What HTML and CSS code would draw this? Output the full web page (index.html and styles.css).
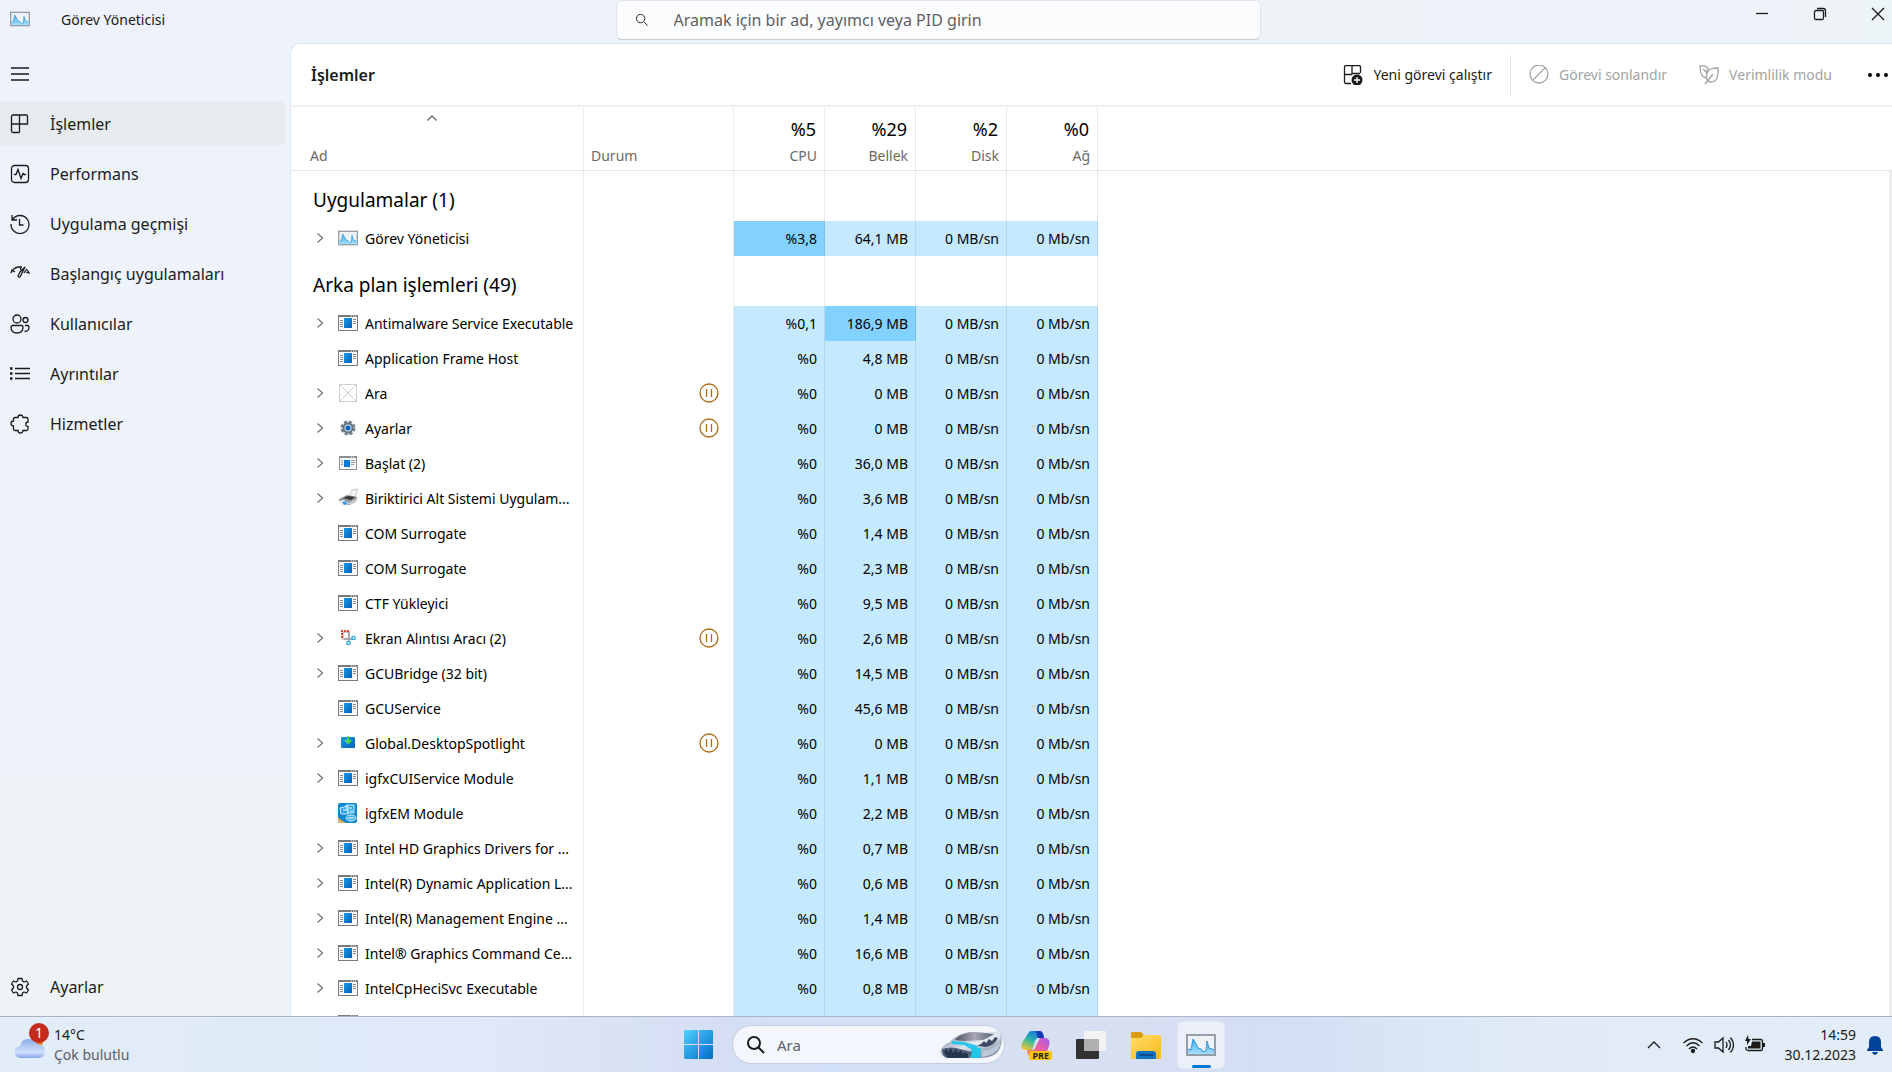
FILE: index.html
```html
<!DOCTYPE html>
<html lang="tr">
<head>
  <meta charset="UTF-8">
  <meta name="viewport" content="width=device-width, initial-scale=1.0">
  <title>Görev Yöneticisi</title>
  <link rel="stylesheet" href="styles.css">
</head>
<body>

  <!-- Shared icons -->
  <svg class="sprite" aria-hidden="true">
    <defs>
      <linearGradient id="blue" x1="0" y1="0" x2="1" y2="1">
        <stop offset="0" stop-color="#1a9be8"/><stop offset="1" stop-color="#0560b6"/>
      </linearGradient>
      <linearGradient id="wave" x1="0" y1="0" x2="0" y2="1">
        <stop offset="0" stop-color="#3fa9ea"/><stop offset="1" stop-color="#a5e0fb"/>
      </linearGradient>
    </defs>
    <symbol id="taskmgr" viewBox="0 0 30 22">
      <rect x="1" y="1" width="28" height="20" fill="#eef2f6" stroke="#959ea9" stroke-width="2"/>
      <path d="M2 15l3 1 2-11 3 5 2 4 3 1 2 3 3-1 1-10 2 7 3 1 2 1v4H2z" fill="url(#wave)"/>
      <path d="M2 15l3 1 2-11 3 5 2 4 3 1 2 3 3-1 1-10 2 7 3 1 2 1" fill="none" stroke="#2b95da"/>
    </symbol>
    <symbol id="app" viewBox="0 0 20 20">
      <rect x="0.5" y="2.5" width="19" height="15" fill="#fafafa" stroke="#7b7b7b"/>
      <path d="M0 2h20v2H0z" fill="#7b7b7b"/>
      <path d="M13 3h1m1 0h1m1 0h1" stroke="#fff"/>
      <path d="M2 7.5h3M2 9.5h3M2 11.5h3M2 13.5h3M15 6.5h3M15 8.5h3M15 10.5h3" stroke="#8a8a8a"/>
      <rect x="6" y="5" width="8" height="10" fill="url(#blue)"/>
    </symbol>
    <symbol id="start-app" viewBox="0 0 20 20">
      <rect x="1.5" y="3.5" width="17" height="13" fill="#f4f6f8" stroke="#8b8f93"/>
      <path d="M1 3h18v2H1z" fill="#8b8f93"/>
      <path d="M13 4h1m1 0h1" stroke="#fff"/>
      <path d="M3 7.5h2M3 9.5h2M3 11.5h2M13 7.5h4M13 9.5h4M13 11.5h3" stroke="#999"/>
      <rect x="6" y="7" width="6" height="7" fill="#0878d8"/>
    </symbol>
    <symbol id="missing" viewBox="0 0 20 20">
      <path d="M1.5 1.5h17v17h-17zl17 17M18.5 1.5l-17 17" fill="none" stroke="#cfcfcf"/>
    </symbol>
    <symbol id="settings-app" viewBox="0 0 20 20">
      <circle cx="10" cy="10" r="6" fill="none" stroke="#75828f" stroke-width="3" stroke-dasharray="3.2 1.5"/>
      <circle cx="10" cy="10" r="4.5" fill="#d8e2eb" stroke="#657483" stroke-width="2"/>
      <circle cx="10" cy="10" r="2.5" fill="#0865bd"/>
    </symbol>
    <symbol id="printer" viewBox="0 0 20 20">
      <path d="M11 8l3-6 6-1-3 8z" fill="#f2f2f2" stroke="#c8c8c8"/>
      <path d="M1 11l8-4 10 2-1 5-7 3-10-2z" fill="#8f9498"/>
      <path d="M5 10l5-2 7 1-4 3z" fill="#3a3a3a"/>
      <path d="M10 15l8-4v3l-6 3z" fill="#c8cbce"/>
      <path d="M1 13l5-1 5 3-6 2-4-2z" fill="#eef1f4"/>
      <path d="M4 14l4-1 1 3-3 1z" fill="#3a94db"/>
    </symbol>
    <symbol id="snip" viewBox="0 0 20 20">
      <path d="M5 4h6v7H5z" fill="#fafafa" stroke="#c9c9c9" stroke-width="2"/>
      <path d="M4 10V3h7" fill="none" stroke="#df452b" stroke-width="2" stroke-dasharray="2 1"/>
      <path d="M11 4v8l4-2M6 11h6" fill="none" stroke="#9a9fa4" stroke-width="1.5"/>
      <circle cx="15.5" cy="10" r="1.7" fill="none" stroke="#28a5df" stroke-width="1.3"/>
      <circle cx="10.5" cy="15" r="1.7" fill="none" stroke="#28a5df" stroke-width="1.3"/>
    </symbol>
    <symbol id="spotlight" viewBox="0 0 20 20">
      <rect x="3" y="4" width="14" height="11" rx="1" fill="url(#blue)"/>
      <path d="M10 3v7M7 7l3 3 3-3" fill="none" stroke="#51d65a" stroke-width="2"/>
    </symbol>
    <symbol id="igfx" viewBox="0 0 20 20">
      <rect width="19" height="20" rx="2" fill="#0d87d0"/>
      <path d="M0 14q3 4 9 6H2q-2 0-2-2z" fill="#e9b04c"/>
      <path d="M2 5l8-2v8H3zM8 2h8v8h-6z" fill="#2ba9e5" stroke="#d3f0ff"/>
      <path d="M5 7h4M11 5h3M12 8h3" stroke="#fff"/>
      <ellipse cx="13" cy="15" rx="5" ry="3" fill="#3fb0e6" stroke="#d3f0ff"/>
      <path d="M10 15h6" stroke="#fff"/>
    </symbol>
    <symbol id="chevron" viewBox="0 0 10 10">
      <path d="M2.5 0.5L7.5 5 2.5 9.5" fill="none" stroke="#777" stroke-width="1.3"/>
    </symbol>
    <symbol id="pause" viewBox="0 0 20 20">
      <path d="M10 1a9 9 0 1 0 0 18a9 9 0 1 0 0-18M7.5 6v8M12.5 6v8" fill="none" stroke="#ad6b14" stroke-width="1.3"/>
    </symbol>
    <symbol id="lens" viewBox="0 0 20 20">
      <circle cx="8" cy="8" r="6"/><path d="M12.5 12.5L18 18"/>
    </symbol>
  </svg>

  <div class="window">
    <!-- Title bar -->
    <header class="titlebar">
      <div class="app-title">
        <svg class="title-icon"><use href="#taskmgr"/></svg>
        <span>Görev Yöneticisi</span>
      </div>
      <label class="search">
        <svg class="search-icon line"><use href="#lens"/></svg>
        <input type="search" aria-label="Ara" placeholder="Aramak için bir ad, yayımcı veya PID girin">
      </label>
      <div class="window-buttons">
        <button aria-label="Simge durumuna küçült"><svg class="line" viewBox="0 0 14 14"><path d="M1 6.5h12"/></svg></button>
        <button aria-label="Önceki boyut"><svg class="line" viewBox="0 0 14 14"><rect x="1.5" y="3.5" width="9" height="9" rx="1.5"/><path d="M4 1.5h6a2.5 2.5 0 0 1 2.5 2.5v6"/></svg></button>
        <button aria-label="Kapat"><svg class="line" viewBox="0 0 14 14"><path d="M1 1l12 12M13 1L1 13"/></svg></button>
      </div>
    </header>

    <div class="main">
      <!-- Sidebar -->
      <nav class="sidebar">
        <button class="menu" aria-label="Menü"><svg class="line" viewBox="0 0 20 20"><path d="M1 4h18M1 10h18M1 16h18"/></svg></button>
        <a href="#" class="nav-item active"><svg class="line" viewBox="0 0 20 20"><path d="M3 1h13a1.5 1.5 0 0 1 1.5 1.5V10H1.5V2.5A1.5 1.5 0 0 1 3 1zM1.5 10v7A1.5 1.5 0 0 0 3 18.5h5.5a1 1 0 0 0 1-1V1"/></svg>İşlemler</a>
        <a href="#" class="nav-item"><svg class="line" viewBox="0 0 20 20"><rect x="1.5" y="1.5" width="17" height="17" rx="3"/><path d="M4 10.5h2l2-5 3 9 2-5 1 1h2"/></svg>Performans</a>
        <a href="#" class="nav-item"><svg class="line" viewBox="0 0 20 20"><path d="M2 1v5h5M2.5 5.5A9 9 0 1 1 1 10M9.5 5v6h4"/></svg>Uygulama geçmişi</a>
        <a href="#" class="nav-item"><svg class="line" viewBox="0 0 20 20"><path d="M1 9q2-5 7-6h4M1 9l1-3 3 2M10 3l1 3M15 3l-5 10a1.5 1.5 0 0 1-2-1l2-4zM14 9l2-3M16 5q2 1 3 4l-3-1"/></svg>Başlangıç uygulamaları</a>
        <a href="#" class="nav-item"><svg class="line" viewBox="0 0 20 20"><circle cx="7" cy="5" r="4"/><circle cx="15.5" cy="6" r="2.5"/><path d="M2.5 11.5h9a1.5 1.5 0 0 1 1.5 1.5q0 6-6 6t-6-6a1.5 1.5 0 0 1 1.5-1.5zM15 11.5h2.5A1.5 1.5 0 0 1 19 13q0 4.5-4.5 4.5"/></svg>Kullanıcılar</a>
        <a href="#" class="nav-item"><svg class="line" viewBox="0 0 20 20"><path d="M5 4.5h15M5 9.5h15M5 14.5h15"/><path d="M0 4.5h2.5M0 9.5h2.5M0 14.5h2.5" stroke-width="2.5"/></svg>Ayrıntılar</a>
        <a href="#" class="nav-item"><svg class="line" viewBox="0 0 20 20"><path d="M5 3.5h3a2.5 2.5 0 0 1 5 0h3.5A1.500 1.500 0 0 1 18 5v3a2.200 2.200 0 1 0 0 4.500V15a1.500 1.500 0 0 1-1.500 1.500H13a2.500 2.500 0 0 1-5 0H5A1.500 1.500 0 0 1 3.500 15v-3a2.300 2.300 0 0 1 0-5V5A1.500 1.500 0 0 1 5 3.500"/></svg>Hizmetler</a>
        <a href="#" class="nav-item settings"><svg class="line" viewBox="0 0 20 20"><path d="M8 1.5h4l.5 2.500 1.500 1 2.500-1 2 3-2 2v2l2 2-2 3-2.500-1-1.500 1-.5 2.500H8L7.500 16 6 15l-2.500 1-2-3 2-2V9l-2-2 2-3L6 5l1.500-1z" stroke-linejoin="round"/><circle cx="10" cy="10" r="2.5"/></svg>Ayarlar</a>
      </nav>

      <!-- Processes panel -->
      <main class="panel">
        <div class="toolbar">
          <h1>İşlemler</h1>
          <button class="run">
            <svg class="line" viewBox="0 0 20 20"><path d="M8 18.5H3A1.5 1.5 0 0 1 1.5 17V2A1.5 1.5 0 0 1 3 .5h13A1.5 1.5 0 0 1 17.5 2v6M9 .5v9M1.5 9.5H9M9 8.500h8"/><circle cx="14" cy="15" r="5.5" fill="#1b1b1b" stroke="none"/><path d="M11 15h6M14 12v6" stroke="#fff"/></svg>
            Yeni görevi çalıştır
          </button>
          <button disabled>
            <svg class="line" viewBox="0 0 20 20"><circle cx="10" cy="9" r="9"/><path d="M4 15L16 3"/></svg>
            Görevi sonlandır
          </button>
          <button disabled>
            <svg class="line" viewBox="0 0 20 20"><path d="M7 13Q1 12 1 1q6-1 9 3M4 4l4 4M8 8V4M6 19l8-10M8 15q-2-8 4-11 3-1 7-1 1 14-7 14-2 0-4-2"/></svg>
            Verimlilik modu
          </button>
          <button class="more" aria-label="Diğer"><svg viewBox="0 0 20 20"><circle cx="2" cy="10" r="2"/><circle cx="10" cy="10" r="2"/><circle cx="18" cy="10" r="2"/></svg></button>
        </div>

        <div class="table-container">
          <table>
            <colgroup>
              <col class="col-name"><col class="col-status">
              <col class="col-value"><col class="col-value"><col class="col-value"><col class="col-value">
              <col>
            </colgroup>
            <thead>
              <tr>
                <th><svg class="sort line" viewBox="0 0 10 6"><path d="M0.5 5.5L5 1l4.5 4.5"/></svg>Ad</th>
                <th>Durum</th>
                <th class="value"><strong>%5</strong>CPU</th>
                <th class="value"><strong>%29</strong>Bellek</th>
                <th class="value"><strong>%2</strong>Disk</th>
                <th class="value"><strong>%0</strong>Ağ</th>
                <th></th>
              </tr>
            </thead>
            <tbody id="processes"></tbody>
          </table>
        </div>
      </main>
    </div>
  </div>

  <!-- Taskbar -->
  <footer class="taskbar">
    <a href="#" class="weather">
      <span class="weather-icon">
        <svg viewBox="0 0 30 30">
          <defs><linearGradient id="cloud" x1="0" y1="0" x2="0" y2="1"><stop offset="0" stop-color="#8eaeea"/><stop offset="0.7" stop-color="#cfe0fb"/><stop offset="1" stop-color="#86a8e8"/></linearGradient></defs>
          <circle cx="22" cy="12" r="6" fill="#f0801c"/>
          <path d="M6 28a6 6 0 0 1-1-12Q7 8 14 9q6 0 8 5 8 0 8 7t-7 7z" fill="url(#cloud)"/>
        </svg>
        <span class="badge">1</span>
      </span>
      <span class="weather-text">14°C<small>Çok bulutlu</small></span>
    </a>

    <div class="apps">
      <button class="tile start" aria-label="Başlat">
        <svg viewBox="0 0 30 30">
          <defs><linearGradient id="win" x1="0" y1="0" x2="30" y2="30" gradientUnits="userSpaceOnUse"><stop offset="0" stop-color="#4fd2fc"/><stop offset="1" stop-color="#0067c8"/></linearGradient></defs>
          <path d="M1 0h13v14H0V1zM15 0h13l1 1v13H15zM0 15h14v14H1l-1-1zM15 15h14v13l-1 1H15z" fill="url(#win)"/>
        </svg>
      </button>
      <label class="task-search">
        <svg class="line" viewBox="0 0 20 20"><use href="#lens"/></svg>
        <input type="text" aria-label="Windows araması" placeholder="Ara">
        <svg class="highlight" viewBox="0 0 62 28">
          <defs>
            <linearGradient id="hill" x1="0" y1="0" x2="1" y2="1"><stop offset="0" stop-color="#6d7890"/><stop offset="0.5" stop-color="#dfe5ee"/><stop offset="1" stop-color="#5c6b87"/></linearGradient>
            <linearGradient id="peak" x1="0" y1="0" x2="1" y2="0"><stop offset="0" stop-color="#4c5163"/><stop offset="0.5" stop-color="#a9a7b4"/><stop offset="1" stop-color="#565f75"/></linearGradient>
          </defs>
          <path d="M0 21Q2 14 10 11 18 1 34 1q14 2 25-1 5 7 2 14-3 13-22 13H6q-5-1-6-6z" fill="url(#hill)"/>
          <path d="M15 9Q22 1 34 1q11 1 20 2L44 9 24 10z" fill="url(#peak)"/>
          <path d="M28 12l15-3 17-7q1 7-6 10-10 5-18 4z" fill="#e4e9f0"/>
          <path d="M12 10l12 1 14 4-4 5-10-6-12-1z" fill="#28c5ee"/>
          <path d="M30 21l4-5 7 1-1 10h-9z" fill="#20c6ea"/>
          <path d="M2 18q10-3 18 0l12 3-2 6H7q-6-2-5-9z" fill="#53627c"/>
          <path d="M4 22l2-5 2 4 3-4 2 5 3-4 2 4 3-3 2 4 3-2 2 3v3H8z" fill="#263550"/>
          <path d="M37 15l4-2 3-3 2 2 3-4 3 2 3-4 3 1q-3 7-12 9z" fill="#3c4b66"/>
          <path d="M42 20q12-1 18-9-1 13-18 15z" fill="#bcc8d8"/>
        </svg>
      </label>
      <button class="tile" aria-label="Copilot">
        <span class="copilot">
          <svg viewBox="0 0 30 30">
            <defs>
              <linearGradient id="cop1" x1="0.7" y1="0" x2="0.2" y2="1"><stop offset="0" stop-color="#1b6be0"/><stop offset="0.5" stop-color="#2fb7a8"/><stop offset="1" stop-color="#f0c52b"/></linearGradient>
              <linearGradient id="cop2" x1="1" y1="0" x2="0" y2="1"><stop offset="0" stop-color="#a25cf5"/><stop offset="0.5" stop-color="#ef5f9c"/><stop offset="1" stop-color="#ff8a4c"/></linearGradient>
            </defs>
            <path d="M8 2q1-1 3-1h8q3 0 4 7h-6q-3 1-4 6l-2 6H4q-5-1-3-7z" fill="url(#cop1)"/>
            <path d="M15 1h4q3 0 4 7h-6z" fill="#1639b8"/>
            <path d="M19 8h6q5 1 3 8l-3 8q-2 4-6 4h-9q-3-1-4-8h5q3 0 4-4z" fill="url(#cop2)"/>
          </svg>
          <span class="pre">PRE</span>
        </span>
      </button>
      <button class="tile" aria-label="Görev görünümü">
        <svg viewBox="0 0 30 30">
          <rect y="9" width="23" height="20" rx="1" fill="#31312f"/>
          <rect x="8" y="1" width="22" height="20" rx="1" fill="#f3f3f3"/>
          <path d="M8 9h15v12H8z" fill="#b0b0b0"/>
        </svg>
      </button>
      <button class="tile" aria-label="Dosya Gezgini">
        <svg viewBox="0 0 30 30">
          <defs><linearGradient id="folder" x1="0" y1="0" x2="1" y2="1"><stop offset="0" stop-color="#ffdc6b"/><stop offset="1" stop-color="#fbb81b"/></linearGradient></defs>
          <path d="M0 3q0-1 1-1h9l3 3h-1v4H0z" fill="#dd9b10"/>
          <path d="M0 8h10l3-3h16q1 0 1 1v23H0z" fill="url(#folder)"/>
          <path d="M5 29v-5q0-3 3-3h14q3 0 3 3v5z" fill="#0f73c2"/>
          <path d="M8 25h14" stroke="#073f7e" stroke-width="1.5"/>
        </svg>
      </button>
      <button class="tile running" aria-label="Görev Yöneticisi"><svg><use href="#taskmgr"/></svg></button>
    </div>

    <div class="tray">
      <button class="tray-up" aria-label="Gizli simgeler"><svg class="line" viewBox="0 0 14 20"><path d="M1 13l6-6 6 6"/></svg></button>
      <button aria-label="Ağ"><svg class="line" viewBox="0 0 20 20"><path d="M0.5 8q9.5-8.5 19 0M3.5 11q6.5-6.500 13 0M6 14q4-4 8 0"/><circle cx="10" cy="16" r="1.5" fill="#1b1b1b"/></svg></button>
      <button aria-label="Ses"><svg class="line" viewBox="0 0 20 20"><path d="M1 7h3.500L9 3v14l-4.500-4H1zM12 7q2 3 0 6M14.500 5q4 5 0 10M16.500 2.500q6 7.500 0 15"/></svg></button>
      <button aria-label="Pil"><svg class="line" viewBox="0 0 20 20"><path d="M7 4.5h8.500a2 2 0 0 1 2 2v7a2 2 0 0 1-2 2H3a2 2 0 0 1-2-2V12"/><path d="M7 6.500h8.500v7H3V11h3z" fill="#1b1b1b" stroke="none"/><path d="M19 8v4" stroke-width="2"/><path d="M3 0L0 6h2v4l4-6H3.500z" fill="#1b1b1b" stroke="none"/></svg></button>
      <time class="clock">14:59<br>30.12.2023</time>
      <button class="bell" aria-label="Bildirimler"><svg viewBox="0 0 16 20"><path d="M8 1q6 0 6 6v5l2 3v1H0v-1l2-3V7q0-6 6-6zM5 17h6q-1 3-3 3t-3-3z" fill="#00429b"/></svg></button>
    </div>
  </footer>

  <script>
    const groups = [
      {
        title: 'Uygulamalar (1)',
        rows: [
          { name: 'Görev Yöneticisi', icon: 'taskmgr', open: true, cpu: '%3,8', mem: '64,1 MB', hot: 'cpu' }
        ]
      },
      {
        title: 'Arka plan işlemleri (49)',
        rows: [
          { name: 'Antimalware Service Executable', open: true, cpu: '%0,1', mem: '186,9 MB', hot: 'mem' },
          { name: 'Application Frame Host', mem: '4,8 MB' },
          { name: 'Ara', icon: 'missing', open: true, paused: true, mem: '0 MB' },
          { name: 'Ayarlar', icon: 'settings-app', open: true, paused: true, mem: '0 MB' },
          { name: 'Başlat (2)', icon: 'start-app', open: true, mem: '36,0 MB' },
          { name: 'Biriktirici Alt Sistemi Uygulam...', icon: 'printer', open: true, mem: '3,6 MB' },
          { name: 'COM Surrogate', mem: '1,4 MB' },
          { name: 'COM Surrogate', mem: '2,3 MB' },
          { name: 'CTF Yükleyici', mem: '9,5 MB' },
          { name: 'Ekran Alıntısı Aracı (2)', icon: 'snip', open: true, paused: true, mem: '2,6 MB' },
          { name: 'GCUBridge (32 bit)', open: true, mem: '14,5 MB' },
          { name: 'GCUService', mem: '45,6 MB' },
          { name: 'Global.DesktopSpotlight', icon: 'spotlight', open: true, paused: true, mem: '0 MB' },
          { name: 'igfxCUIService Module', open: true, mem: '1,1 MB' },
          { name: 'igfxEM Module', icon: 'igfx', mem: '2,2 MB' },
          { name: 'Intel HD Graphics Drivers for ...', open: true, mem: '0,7 MB' },
          { name: 'Intel(R) Dynamic Application L...', open: true, mem: '0,6 MB' },
          { name: 'Intel(R) Management Engine ...', open: true, mem: '1,4 MB' },
          { name: 'Intel® Graphics Command Ce...', open: true, mem: '16,6 MB' },
          { name: 'IntelCpHeciSvc Executable', open: true, mem: '0,8 MB' },
          { name: '', mem: '', last: true }
        ]
      }
    ];

    const icon = (id, cls) => `<svg class="${cls}"><use href="#${id}"/></svg>`;

    function processRow(p) {
      const chevron = p.open ? `<button class="expand" aria-label="Genişlet">${icon('chevron', 'chevron')}</button>` : '<span class="expand"></span>';
      return `<tr class="process">
        <td><div class="name">${chevron}${icon(p.icon || 'app', 'process-icon')}<span>${p.name}</span></div></td>
        <td class="status">${p.paused ? icon('pause', 'pause') : ''}</td>
        <td class="value ${p.hot === 'cpu' ? 'hot' : ''}">${p.last ? '' : p.cpu || '%0'}</td>
        <td class="value ${p.hot === 'mem' ? 'hot' : ''}">${p.mem}</td>
        <td class="value">${p.last ? '' : '0 MB/sn'}</td>
        <td class="value">${p.last ? '' : '0 Mb/sn'}</td>
        <td></td>
      </tr>`;
    }

    document.getElementById('processes').innerHTML = groups.map(g =>
      `<tr class="group"><th scope="rowgroup">${g.title}</th>${'<td></td>'.repeat(6)}</tr>` + g.rows.map(processRow).join('')
    ).join('');
  </script>

</body>
</html>
```
FILE: styles.css
```css
* {
  box-sizing: border-box;
}

body {
  margin: 0;
  height: 100vh;
  display: flex;
  flex-direction: column;
  overflow: hidden;
  font-family: "Noto Sans", "Open Sans", sans-serif;
  font-size: 14px;
  color: #1b1b1b;
}

button, input {
  font: inherit;
  color: inherit;
  background: none;
  border: none;
  padding: 0;
  outline: none;
}

button {
  display: flex;
  align-items: center;
  justify-content: center;
}

a {
  color: inherit;
  text-decoration: none;
}

svg {
  display: block;
  flex: none;
}

.sprite {
  position: absolute;
  width: 0;
  height: 0;
}

.line {
  fill: none;
  stroke: currentColor;
  stroke-width: 1.3px;
}

.window {
  flex: 1;
  min-height: 0;
  display: flex;
  flex-direction: column;
  background: linear-gradient(#eef3fb, #eef3fa 60%, #eef3f7);
}

/* Title bar */
.titlebar {
  flex: none;
  height: 43px;
  display: grid;
  grid-template-columns: 1fr minmax(0, 645px) 1fr;
  align-items: start;
  padding-right: 16px;
  background: linear-gradient(90deg, #eef3fb, #edf1fa 40%, #edf3f6 70%, #edf1fa 82%, #edf4f7);
}

.app-title {
  display: flex;
  align-items: center;
  gap: 31px;
  height: 38px;
  padding-left: 10px;
}

.title-icon {
  width: 20px;
  height: 16px;
}

.search {
  display: flex;
  align-items: center;
  height: 40px;
  padding-left: 18px;
  background: #fbfcfe;
  border: 1px solid #e1e5ea;
  border-bottom-color: #c6cacd;
  border-radius: 6px;
}

.search-icon {
  width: 14px;
  height: 14px;
  margin-right: 25px;
}

.search input {
  flex: 1;
  font-size: 16px;
}

input::placeholder {
  color: #5f6163;
  opacity: 1;
}

.window-buttons {
  display: flex;
  justify-content: flex-end;
  gap: 30px;
  margin-right: -16px;
}

.window-buttons button {
  width: 28px;
  height: 28px;
}

.window-buttons svg {
  width: 14px;
  height: 14px;
}

.main {
  flex: 1;
  min-height: 0;
  display: flex;
}

/* Sidebar */
.sidebar {
  flex: none;
  width: 290px;
  display: flex;
  flex-direction: column;
  gap: 5px;
  padding: 8px 5px 7px 0;
}

.menu {
  width: 40px;
  height: 45px;
}

.menu svg {
  width: 20px;
  height: 20px;
}

.nav-item {
  display: flex;
  align-items: center;
  gap: 20px;
  height: 45px;
  padding-left: 10px;
  font-size: 16px;
  border-radius: 0 6px 6px 0;
}

.nav-item svg {
  width: 20px;
  height: 20px;
}

.nav-item.active {
  background: #e6ebee;
}

.nav-item.settings {
  margin-top: auto;
}

/* Panel */
.panel {
  flex: 1;
  min-width: 0;
  display: flex;
  flex-direction: column;
  background: #fff;
  border: 1px solid #dfe5ec;
  border-width: 1px 0 0 1px;
  border-radius: 10px 0 0 0;
}

.toolbar {
  flex: none;
  display: flex;
  align-items: center;
  height: 63px;
  padding: 0 4px 0 20px;
  border-bottom: 2px solid #edf0f5;
}

.toolbar h1 {
  flex: 1;
  margin: 0;
  font-size: 16px;
  font-weight: 600;
}

.toolbar button {
  gap: 10px;
  height: 40px;
  margin-left: 32px;
}

.toolbar button:disabled {
  color: #a3a3a3;
}

.toolbar svg {
  width: 20px;
  height: 20px;
}

.toolbar .run {
  padding-right: 18px;
  margin-right: -14px;
  border-right: 1px solid #e5e5e5;
}

.toolbar .more {
  margin-left: 36px;
}

/* Process table */
.table-container {
  flex: 1;
  min-height: 0;
  overflow: hidden;
}

table {
  width: 100%;
  table-layout: fixed;
  border-collapse: separate;
  border-spacing: 0;
}

.col-name {
  width: 293px;
}

.col-status {
  width: 150px;
}

.col-value {
  width: 91px;
}

th, td {
  padding: 0 7px;
  text-align: left;
  font-weight: 400;
  white-space: nowrap;
  border-right: 1px solid rgba(0, 0, 0, 0.08);
}

th:last-child {
  border-right: none;
}

td:last-child {
  border-right: 3px solid #ededed;
}

thead th {
  position: relative;
  height: 64px;
  padding-bottom: 4px;
  vertical-align: bottom;
  line-height: 20px;
  color: #6a6a6a;
  border-bottom: 1px solid #e6e6e6;
}

thead th:first-child {
  padding-left: 19px;
}

thead strong {
  display: block;
  padding-right: 1px;
  font-size: 18px;
  font-weight: 400;
  line-height: 34px;
  color: #000;
}

.sort {
  position: absolute;
  top: 8px;
  left: calc(50% - 10px);
  width: 10px;
  height: 6px;
}

.value {
  text-align: right;
}

.group th, .group td {
  height: 50px;
}

.group th {
  padding: 8px 0 0 22px;
  font-size: 19px;
  color: #000;
}

.process td {
  height: 35px;
  padding-bottom: 1px;
  color: #000;
}

.process .value {
  background: #c5e9fe;
}

.process .value.hot {
  background: #83d1fe;
}

.name {
  display: flex;
  align-items: center;
  padding-left: 17px;
  overflow: hidden;
}

.expand {
  width: 10px;
  margin-right: 13px;
}

.chevron {
  width: 10px;
  height: 10px;
}

.process-icon {
  width: 20px;
  height: 20px;
  margin-right: 7px;
}

.pause {
  width: 20px;
  height: 20px;
  margin-left: auto;
  margin-right: 7px;
}

/* Taskbar */
.taskbar {
  flex: none;
  height: 56px;
  display: grid;
  grid-template-columns: 1fr auto 1fr;
  align-items: center;
  padding: 0 9px 0 15px;
  background: linear-gradient(90deg, #e2edf8, #dfe9f8 25%, #d5def3 38%, #d3e1f8 44%, #d8dff1 55%, #d4def4 68%, #e0ebf7 80%, #e2edf7);
  border-top: 1px solid #aab4c2;
}

.weather {
  display: flex;
  align-items: center;
  gap: 9px;
  line-height: 20px;
}

.weather-icon {
  position: relative;
}

.weather-icon svg {
  width: 30px;
  height: 30px;
}

.badge {
  position: absolute;
  top: -7px;
  left: 14px;
  width: 20px;
  height: 20px;
  border-radius: 50%;
  background: #c42b1c;
  color: #fff;
  text-align: center;
}

.weather-text small {
  display: block;
  font-size: 14px;
  color: #5c6066;
}

.apps {
  display: flex;
  align-items: center;
  gap: 7px;
  margin-left: 2px;
}

.tile {
  width: 48px;
  height: 48px;
  border-radius: 5px;
}

.tile svg {
  width: 30px;
  height: 30px;
}

.tile.start {
  margin-right: 2px;
}

.tile.running {
  position: relative;
  background: #ebeff9;
  border: 1px solid #e1e7f3;
}

.tile.running svg {
  height: 22px;
}

.tile.running::after {
  content: "";
  position: absolute;
  bottom: 0;
  left: 14px;
  width: 19px;
  height: 3px;
  border-radius: 2px;
  background: #0078d4;
}

.task-search {
  display: flex;
  align-items: center;
  width: 273px;
  height: 39px;
  padding: 0 2px 0 13px;
  background: #f3f6fd;
  border: 1px solid #c3cce0;
  border-radius: 20px;
}

.task-search .line {
  width: 20px;
  height: 20px;
  margin-right: 11px;
  stroke-width: 2px;
}

.task-search input {
  flex: 1;
  min-width: 0;
  font-size: 15px;
}

.highlight {
  width: 62px;
  height: 28px;
}

.copilot {
  position: relative;
}

.pre {
  position: absolute;
  right: -1px;
  bottom: 0;
  padding: 0 3px;
  border-radius: 2px;
  background: #fdc50d;
  color: #222;
  font-size: 9px;
  font-weight: 700;
  line-height: 9px;
}

.tray {
  display: flex;
  align-items: center;
  justify-content: flex-end;
  gap: 11px;
}

.tray svg {
  width: 20px;
  height: 20px;
}

.tray .tray-up {
  margin-right: 11px;
}

.tray-up svg {
  width: 14px;
}

.clock {
  margin-left: 8px;
  text-align: right;
  line-height: 20px;
}

.bell svg {
  width: 16px;
}
```
